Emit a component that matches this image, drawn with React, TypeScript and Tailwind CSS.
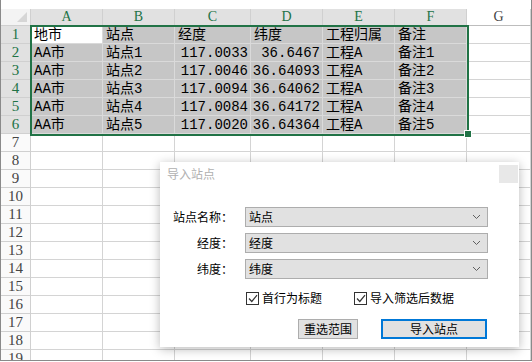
import React from "react";

const cols = ["A", "B", "C", "D", "E", "F", "G"];
const colWidths = "grid-cols-[30px_72px_72px_76px_72px_72px_72px_1fr]";

const data: string[][] = [
  ["地市", "站点", "经度", "纬度", "工程归属", "备注"],
  ["AA市", "站点1", "117.0033", "36.6467", "工程A", "备注1"],
  ["AA市", "站点2", "117.0046", "36.64093", "工程A", "备注2"],
  ["AA市", "站点3", "117.0094", "36.64062", "工程A", "备注3"],
  ["AA市", "站点4", "117.0084", "36.64172", "工程A", "备注4"],
  ["AA市", "站点5", "117.0020", "36.64364", "工程A", "备注5"],
];

const cellFont = {
  fontFamily: '"Liberation Mono", "Noto Sans CJK SC", monospace',
};

function Chevron() {
  return (
    <svg width="9" height="6" viewBox="0 0 9 6" className="mr-[6px]">
      <path d="M1 1 L4.5 4.5 L8 1" fill="none" stroke="#606060" strokeWidth="1" />
    </svg>
  );
}

function Select({ value }: { value: string }) {
  return (
    <div className="flex h-[20px] w-[243px] items-center justify-between border border-[#adadad] bg-[#e1e1e1] pl-[3px] text-[12px] leading-none text-black">
      <span>{value}</span>
      <Chevron />
    </div>
  );
}

function Check({ label }: { label: string }) {
  return (
    <div className="flex items-center gap-[3px] text-[12px] text-black">
      <div className="flex h-[13px] w-[13px] items-center justify-center border border-[#333] bg-white">
        <svg width="10" height="9" viewBox="0 0 10 9">
          <path d="M1 4.5 L3.8 7.5 L9 1.2" fill="none" stroke="#333" strokeWidth="1.2" />
        </svg>
      </div>
      <span>{label}</span>
    </div>
  );
}

function Dialog() {
  return (
    <div
      className="absolute left-[160px] top-[162px] h-[185px] w-[359px] bg-white shadow-[0_2px_10px_rgba(0,0,0,0.28)]"
      style={{ fontFamily: '"Noto Sans CJK SC", sans-serif' }}
    >
      <div className="flex h-[24px] items-start justify-between">
        <span className="ml-[7px] mt-[4px] text-[12px] leading-[16px] text-[#b0b0b0]">导入站点</span>
        <div className="mr-[1px] mt-[3px] h-[18px] w-[19px] bg-[#e8e8e8]" />
      </div>
      <div className="mt-[21px] flex flex-col gap-[6px]">
        {[
          ["站点名称：", "站点"],
          ["经度：", "经度"],
          ["纬度：", "纬度"],
        ].map(([l, v]) => (
          <div key={l} className="flex items-center">
            <div className="w-[73px] text-right text-[12px] text-black">{l}</div>
            <div className="ml-[12px]">
              <Select value={v} />
            </div>
          </div>
        ))}
      </div>
      <div className="ml-[86px] mt-[10px] flex items-center gap-[18px]">
        <Check label="首行为标题" />
        <div className="ml-[14px]">
          <Check label="导入筛选后数据" />
        </div>
      </div>
      <div className="mt-[12px] flex items-center">
        <div className="ml-[138px] flex h-[20px] w-[60px] items-center justify-center border border-[#adadad] bg-[#e1e1e1] text-[12px] text-black">
          重选范围
        </div>
        <div className="ml-[23px] flex h-[20px] w-[106px] items-center justify-center border-2 border-[#0078d7] bg-[#e1e1e1] text-[12px] text-black">
          导入站点
        </div>
      </div>
    </div>
  );
}

export default function App() {
  const rows = Array.from({ length: 19 }, (_, i) => i + 1);
  return (
    <div className="relative h-[362px] w-[532px] overflow-hidden bg-white">
      <div className="h-[361px] w-[532px] overflow-hidden border-x border-b border-[#8a8a8a]">
        <div className="h-[9px]" />
        <div className={`grid ${colWidths} h-[17px]`}>
          <div className="flex items-end justify-end border-b border-r border-[#d0d0d0] bg-[#f3f3f3] pb-[3px] pr-[3px]">
            <svg width="10" height="10" viewBox="0 0 10 10">
              <path d="M10 0 L10 10 L0 10 Z" fill="#d6d6d6" />
            </svg>
          </div>
          {cols.map((c, i) => (
            <div
              key={c}
              className={`flex items-center justify-center border-b border-r border-b-[#bdbdbd] border-r-[#d0d0d0] text-[14px] leading-none ${
                i < 6 ? "bg-[#e1e1e1] text-[#217346]" : "bg-white text-[#444]"
              }`}
              style={{ fontFamily: '"Liberation Serif", serif' }}
            >
              {c}
            </div>
          ))}
        </div>
        {rows.map((r) => {
          const inSel = r <= 6;
          return (
            <div key={r} className={`grid ${colWidths} h-[18px]`}>
              <div
                className={`flex items-center justify-center border-b border-r border-[#d0d0d0] text-[15px] leading-none ${
                  inSel ? "bg-[#e1e1e1] text-[#217346]" : "bg-[#fafafa] text-[#444]"
                }`}
                style={{ fontFamily: '"Liberation Serif", serif' }}
              >
                {r}
              </div>
              {cols.map((c, ci) => {
                const val = inSel && ci < 6 ? data[r - 1][ci] : "";
                const numeric = r > 1 && (ci === 2 || ci === 3);
                const selected = inSel && ci < 6;
                const active = r === 1 && ci === 0;
                return (
                  <div
                    key={c}
                    className={`flex items-center overflow-visible whitespace-nowrap border-b border-r text-[14px] leading-none text-black ${
                      numeric ? "justify-end pr-[2px]" : "pl-[3px]"
                    } ${
                      active
                        ? "border-[#d9d9d9] bg-white"
                        : selected
                        ? "border-[#dadada] bg-[#c6c6c6]"
                        : "border-[#d4d4d4] bg-white"
                    }`}
                    style={cellFont}
                  >
                    {val}
                  </div>
                );
              })}
            </div>
          );
        })}
      </div>
      <div className="pointer-events-none absolute left-[30px] top-[25px] h-[111px] w-[439px] border-2 border-[#217346]" />
      <div className="absolute left-[465px] top-[131px] h-[6px] w-[6px] bg-[#217346] outline outline-1 outline-white" />
      <Dialog />
    </div>
  );
}
